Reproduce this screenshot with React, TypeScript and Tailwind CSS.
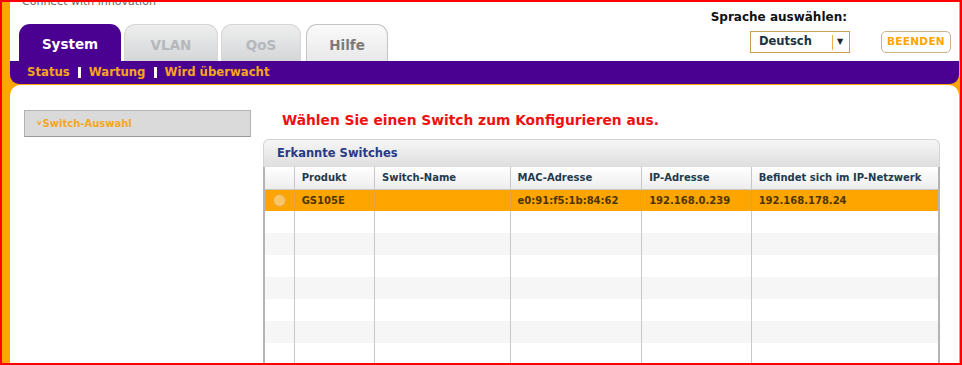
import React from "react";

const cols = [31, 80, 135, 131, 109, 188];

export default function App() {
  const headers = ["", "Produkt", "Switch-Name", "MAC-Adresse", "IP-Adresse", "Befindet sich im IP-Netzwerk"];
  const rows = Array.from({ length: 7 });
  return (
    <div className="w-[962px] h-[365px] overflow-hidden border-2 border-[#ff0000] bg-[#ffa500] pl-[8px] pr-px font-['DejaVu_Sans',sans-serif]">
      <div className="flex h-full flex-col">
        {/* Header */}
        <div className="flex h-[59px] shrink-0 items-end justify-between bg-white">
          <div className="flex h-full flex-col justify-between pl-[9px]">
            <div className="-mt-[7px] pl-[3px] font-['DejaVu_Sans',sans-serif] text-[11px] leading-[13px] text-[#666]">
              Connect with innovation
            </div>
            <div className="flex items-end gap-[3px]">
              <div className="flex h-[37px] w-[102px] items-center justify-center rounded-t-[11px] bg-[#4a0090] pt-[4px] text-[13.5px] font-bold text-white">
                System
              </div>
              <div className="flex h-[37px] w-[94px] items-center justify-center rounded-t-[11px] border border-b-0 border-[#d6d6d6] bg-gradient-to-b from-[#eeeeee] to-[#d4d6d8] pt-[4px] text-[13.5px] font-bold text-[#b4b8bc]">
                VLAN
              </div>
              <div className="flex h-[37px] w-[80px] items-center justify-center rounded-t-[11px] border border-b-0 border-[#d6d6d6] bg-gradient-to-b from-[#eeeeee] to-[#d4d6d8] pt-[4px] text-[13.5px] font-bold text-[#b4b8bc]">
                QoS
              </div>
              <div className="ml-[2px] flex h-[37px] w-[82px] items-center justify-center rounded-t-[11px] border border-b-0 border-[#c4c4c4] bg-gradient-to-b from-[#fafafa] to-[#e8e8e8] pt-[4px] text-[13.5px] font-bold text-[#7b7b7b]">
                Hilfe
              </div>
            </div>
          </div>
          <div className="mb-[8px] mr-[8px] flex items-end gap-[31px]">
            <div className="flex flex-col items-end">
              <div className="mr-[3px] text-[12px] font-bold leading-[14px] text-[#111]">Sprache auswählen:</div>
              <div className="mt-[7px] flex h-[22px] w-[100px] items-center border border-[#c8a050] bg-white pl-[8px]">
                <span className="w-[73px] text-[11.5px] font-bold text-[#1b3340]">Deutsch</span>
                <span className="h-[15px] w-px bg-[#f0b050]" />
                <span className="ml-[4px] text-[8px] text-[#222]">▼</span>
              </div>
            </div>
            <div className="flex h-[22px] w-[70px] items-center justify-center rounded-[5px] border border-[#cfb088] bg-white text-[10.5px] font-bold tracking-[0.3px] text-[#ffa500]">
              BEENDEN
            </div>
          </div>
        </div>

        {/* Sub navigation */}
        <div className="flex h-[23px] shrink-0 items-center rounded-b-[9px] bg-[#4a0090] pl-[17px] text-[11.7px] font-bold text-[#f7a51e]">
          <span>Status</span>
          <span className="mx-[8px] h-[11px] w-[3px] bg-white" />
          <span>Wartung</span>
          <span className="mx-[8px] h-[11px] w-[3px] bg-white" />
          <span>Wird überwacht</span>
        </div>

        {/* Content */}
        <div className="mt-px flex flex-1 gap-[12px] rounded-t-[10px] bg-white pl-[14px] pr-[18px] pt-[25px]">
          <div className="w-[227px] shrink-0">
            <div className="flex h-[27px] items-center border border-[#b4b4b4] border-b-[#999] bg-[#dadada] pl-[12px] text-[10px] font-bold text-[#f5a623]">
              <span className="mr-px text-[7px] leading-none">v</span>Switch-Auswahl
            </div>
          </div>
          <div className="flex w-[677px] flex-col">
            <div className="h-[20px] pl-[19px] text-[13.8px] font-bold leading-[20px] text-[#ee1111]">
              Wählen Sie einen Switch zum Konfigurieren aus.
            </div>
            <div className="mt-[9px] flex h-[28px] items-center rounded-t-[6px] border border-b-0 border-[#d4d4d4] bg-gradient-to-b from-[#f6f6f6] to-[#dedede] pl-[13px] text-[11.5px] font-bold text-[#283a86]">
              Erkannte Switches
            </div>
            <div className="border-x-2 border-[#b4b4b4]">
              <table className="w-full table-fixed border-collapse">
                <colgroup>
                  {cols.map((w, i) => (
                    <col key={i} style={{ width: i === 0 ? w - 2 : i === cols.length - 1 ? w - 2 : w }} />
                  ))}
                </colgroup>
                <thead>
                  <tr className="h-[22px] bg-gradient-to-b from-white to-[#ededed]">
                    {headers.map((h, i) => (
                      <th
                        key={i}
                        className={`border-b border-[#c6c6c6] pl-[7px] text-left text-[10px] font-bold text-[#1e3b4f] ${i > 0 ? "border-l" : ""}`}
                      >
                        {h}
                      </th>
                    ))}
                  </tr>
                </thead>
                <tbody>
                  <tr className="h-[22px] bg-[#ffa500] text-[10px] font-bold text-[#4d3500]">
                    <td className="p-0">
                      <div className="flex justify-center">
                        <span className="h-[13px] w-[13px] rounded-full border border-[#e3a544] bg-[#f9c566]" />
                      </div>
                    </td>
                    <td className="border-l border-[#e0a040] pl-[7px]">GS105E</td>
                    <td className="border-l border-[#e0a040] pl-[7px]"></td>
                    <td className="border-l border-[#e0a040] pl-[7px]">e0:91:f5:1b:84:62</td>
                    <td className="border-l border-[#e0a040] pl-[7px]">192.168.0.239</td>
                    <td className="border-l border-[#e0a040] pl-[7px]">192.168.178.24</td>
                  </tr>
                  {rows.map((_, r) => (
                    <tr key={r} className={`h-[22px] ${r % 2 === 0 ? "bg-white" : "bg-[#f6f6f6]"}`}>
                      <td></td>
                      <td className="border-l border-[#c8c8c8]"></td>
                      <td className="border-l border-[#c8c8c8]"></td>
                      <td className="border-l border-[#c8c8c8]"></td>
                      <td className="border-l border-[#c8c8c8]"></td>
                      <td className="border-l border-[#c8c8c8]"></td>
                    </tr>
                  ))}
                </tbody>
              </table>
            </div>
          </div>
        </div>
      </div>
    </div>
  );
}
